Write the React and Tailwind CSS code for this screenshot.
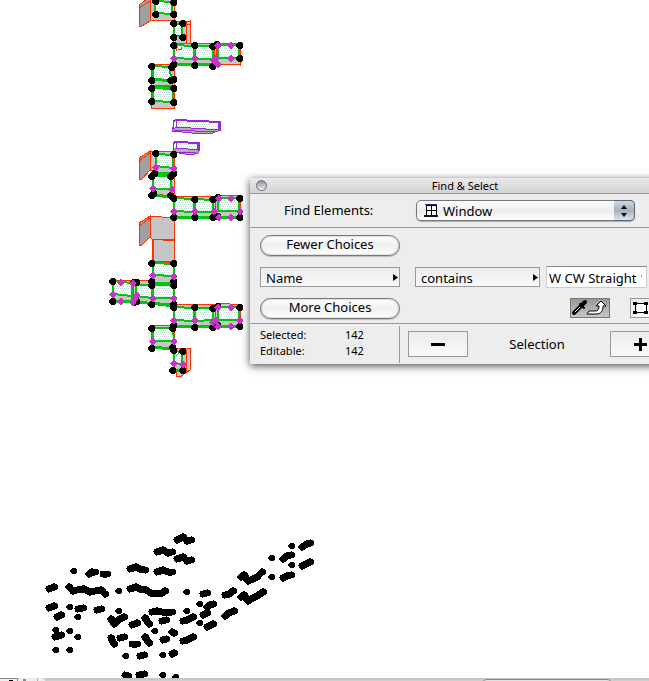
import React, { useState } from 'react';

// Wall faces, drawn behind the windows
const faces = [
  { points: '139,5 150,-3 150,21 142,26 139,26', fill: '#a0a0a0' },
  { points: '150,-3 174,-3 174,21 150,20', fill: '#c6c6c6' },
  { points: '173,22 190,21 190,43 173,43', fill: '#c6c6c6' },
  { points: '173,43 217,43 240,43 240,65 214,64 173,65', fill: '#c6c6c6' },
  { points: '151,64 174,64 174,108 151,108', fill: '#c6c6c6' },
  { points: '139,158 150,151 150,170 142,179 139,179', fill: '#a0a0a0' },
  { points: '150,151 174,152 174,196 152,194 152,170 150,170', fill: '#c6c6c6' },
  { points: '173,196 213,197 220,195 240,196 240,218 173,218', fill: '#c6c6c6' },
  { points: '139,223 150,216 150,237 142,245 139,245', fill: '#a0a0a0' },
  { points: '150,216 174,218 174,240 152,239 150,237', fill: '#c6c6c6' },
  { points: '152,239 174,241 174,261 152,261', fill: '#c6c6c6' },
  { points: '152,262 174,262 174,305 112,302 112,280 152,281', fill: '#c6c6c6' },
  { points: '173,304 213,305 220,303 240,305 240,327 173,327', fill: '#c6c6c6' },
  { points: '151,326 174,325 174,348 151,348', fill: '#c6c6c6' },
  { points: '174,348 190,348 190,370 180,377 176,376 176,370 174,370', fill: '#c6c6c6' },
];

const creases = [
  '139,8 150,1', '186,22 186,43', '182,25 190,24', '178,30 176,38', '180,28 180,36',
  '214,44 214,64', '216,44 216,60', '176,47 183,49', '151,85 174,86',
  '139,161 150,153', '215,197 215,217', '139,226 150,218', '153,240 153,262',
  '131,282 131,300', '133,284 133,302', '215,305 215,325', '177,356 181,352', '186,350 186,372',
];

// Window openings: glass with green frame
const panes = [
  '155,1 172,2 172,14 155,13',
  '174,24 182,24 182,36 174,36',
  '174,45 194,46 194,59 174,58',
  '195,46 213,46 213,59 195,59',
  '218,45 239,45 239,58 218,58',
  '153,66 170,67 171,80 153,79',
  '153,88 173,89 173,102 153,101',
  '156,154 173,155 173,168 156,166',
  '153,176 171,176 171,189 153,189',
  '174,198 194,199 194,212 174,211',
  '195,199 213,200 213,212 195,212',
  '218,198 239,198 239,211 218,211',
  '153,263 174,264 174,276 153,275',
  '153,285 174,285 174,298 153,298',
  '136,284 152,286 152,298 136,296',
  '113,281 132,283 132,296 113,294',
  '174,307 194,308 194,321 174,320',
  '195,308 213,308 213,320 195,321',
  '218,307 239,307 239,320 218,320',
  '153,328 173,328 174,341 153,341',
  '174,351 182,352 182,364 174,363',
];

const sills = [
  '151,79 172,81', '151,87 173,88', '173,64 213,65', '173,217 239,217', '151,195 173,197',
  '154,173 173,173', '151,283 173,283', '112,301 134,302', '134,302 173,305', '173,326 239,326',
  '151,347 173,349', '173,370 182,370', '151,303 173,306',
];

const nodes = [
  [155, 1], [173, 2], [155, 14], [173, 14],
  [173, 23], [182, 23], [173, 37], [182, 37],
  [173, 45], [194, 45], [212, 46], [216, 44], [239, 45], [239, 58],
  [173, 64], [171, 67], [194, 65], [212, 66], [215, 63],
  [151, 66], [151, 80], [170, 80], [173, 79], [151, 88], [173, 88], [151, 101], [173, 102],
  [155, 153], [173, 154], [151, 176], [154, 173], [173, 173], [170, 176],
  [151, 195], [153, 193], [170, 195],
  [173, 198], [194, 199], [212, 199], [217, 197], [239, 198],
  [173, 217], [194, 217], [212, 217], [217, 216], [239, 217],
  [151, 263], [173, 263], [151, 281], [151, 285], [173, 281], [173, 285], [151, 304], [173, 304],
  [112, 281], [133, 282], [136, 282], [112, 301], [133, 302], [136, 301],
  [173, 307], [194, 307], [212, 308], [217, 306], [239, 307],
  [173, 325], [172, 328], [194, 327], [212, 327], [217, 325], [239, 326],
  [151, 328], [151, 348], [172, 347], [173, 350], [182, 351], [172, 370], [182, 370],
];

const grips = [
  [173, 58], [194, 58], [213, 60], [215, 58], [217, 45], [230, 45], [217, 64], [230, 58],
  [155, 167], [173, 168], [152, 188], [171, 189],
  [173, 211], [194, 211], [213, 211], [218, 198], [230, 198], [239, 211], [218, 217], [230, 217],
  [152, 275], [173, 276], [152, 298], [173, 298],
  [120, 282], [132, 283], [112, 294], [136, 295], [134, 298], [120, 301], [132, 302],
  [173, 320], [194, 320], [212, 322], [215, 320], [217, 307], [230, 307], [239, 320], [217, 326], [230, 326],
  [152, 341], [173, 341], [173, 363], [182, 364],
];

// Selection points of the second group
const points = [
  [73, 571], [89, 574], [92, 572], [95, 572], [103, 574], [107, 574],
  [49, 589], [54, 587], [69, 587], [73, 591], [77, 590], [82, 589], [84, 589],
  [90, 592], [95, 591], [101, 590], [102, 591], [105, 594], [118, 591],
  [130, 569], [136, 567], [140, 569], [145, 570], [157, 552], [163, 550], [168, 553], [172, 552],
  [157, 572], [163, 570], [168, 572], [172, 572],
  [130, 589], [136, 587], [140, 589], [146, 590], [151, 593], [157, 593], [162, 593], [165, 591],
  [49, 608], [54, 606], [69, 607], [78, 609], [83, 608], [57, 617], [61, 615], [77, 617],
  [97, 610], [101, 609], [118, 611], [111, 619], [114, 624], [120, 619], [124, 617],
  [132, 625], [137, 623], [145, 618], [149, 624], [152, 612], [157, 611], [162, 612], [167, 612], [172, 612],
  [162, 621], [166, 620], [154, 631], [172, 632], [174, 633],
  [55, 630], [69, 631], [55, 637], [61, 635], [77, 637], [55, 650], [69, 650],
  [111, 638], [114, 644], [120, 638], [124, 637], [132, 644], [137, 644], [145, 637], [149, 643],
  [163, 640], [166, 639], [125, 656], [140, 656], [144, 655], [162, 655], [172, 654], [174, 653],
  [125, 675], [128, 676], [139, 675], [144, 674], [162, 675], [175, 677],
  [177, 540], [183, 537], [187, 541], [191, 540], [177, 559], [183, 557], [187, 561], [191, 560],
  [186, 592], [203, 594], [207, 593], [225, 595], [229, 594], [233, 591],
  [241, 577], [244, 575], [248, 581], [253, 579], [257, 577], [262, 572],
  [271, 558], [271, 577], [283, 559], [287, 556], [291, 555], [291, 546], [302, 547], [307, 544], [310, 543],
  [291, 565], [283, 578], [287, 576], [291, 575], [302, 566], [306, 564], [310, 562],
  [241, 597], [244, 595], [248, 601], [253, 598], [257, 596], [263, 592],
  [199, 604], [186, 611], [207, 607], [210, 605], [213, 604], [203, 615], [207, 613],
  [225, 616], [229, 613], [234, 611], [183, 621], [187, 620], [193, 617],
  [199, 623], [207, 627], [213, 624], [183, 641], [187, 640], [193, 637],
];

// Neighbouring points run together into one blob
const links = points
  .slice(1)
  .map((p, i) => [points[i], p])
  .filter(([a, b]) => Math.hypot(a[0] - b[0], a[1] - b[1]) < 8);

const Drawing = () => (
  <svg className="block h-[678px] w-[649px] shrink-0" viewBox="0 0 649 678" shapeRendering="crispEdges" role="img" aria-label="3D view">
    <defs>
      <pattern id="glass" width="4" height="4" patternUnits="userSpaceOnUse">
        <rect width="4" height="4" fill="#fff" />
        <path d="M0 0h1v1H0zM2 0h1v1H2zM1 2h1v1H1zM3 2h1v1H3z" fill="#c3dfd5" />
      </pattern>
    </defs>

    <g stroke="#ff3300">
      {faces.map((f) => (
        <polygon key={f.points} points={f.points} fill={f.fill} />
      ))}
      {creases.map((c) => (
        <polyline key={c} points={c} fill="none" />
      ))}
    </g>

    <g stroke="#9b26d3" strokeWidth="1">
      <polygon points="172,128 177,127 220,130 213,133 192,133 172,131" fill="#b0b0b0" />
      <polygon points="173,122 176,120 197,121 220,122 220,130 177,127 173,129" fill="url(#glass)" />
      <path d="M173 121l4-1 20 1 23 1v8" fill="none" strokeWidth="2" />
      <path d="M173 121v8M176 119v9M218 121v8M174 130l42 2M177 127l43 3" fill="none" />
      <polygon points="176,148 199,149 198,153 192,155 172,152" fill="#b0b0b0" />
      <polygon points="176,142 199,143 199,150 176,148 173,151 173,143" fill="url(#glass)" />
      <path d="M173 143l3-1 23 1v6" fill="none" strokeWidth="2" />
      <path d="M176 141v8M197 142v7M174 152l22 1" fill="none" />
    </g>

    <g stroke="#00c60d" strokeWidth="2">
      {panes.map((p) => (
        <polygon key={p} points={p} fill="url(#glass)" />
      ))}
      {sills.map((s) => (
        <polyline key={s} points={s} fill="none" strokeWidth="3" />
      ))}
    </g>

    <path d="M176 47v4M176 47h2M178 49h3M181 47v3M176 356l3-3M214 46v16" stroke="#ff3300" fill="none" />

    {nodes.map(([x, y], i) => (
      <path key={i} d={`M${x - 1} ${y - 3}h3l2 2v3l-2 2h-3l-2-2v-3z`} />
    ))}
    <g fill="#c832c8">
      {grips.map(([x, y], i) => (
        <path key={i} d={`M${x} ${y - 3}h1l3 3v1l-3 3h-1l-3-3v-1z`} />
      ))}
    </g>
    {points.map(([x, y], i) => (
      <path key={i} d={`M${x - 1} ${y - 3}h3l2 2v2l-2 2h-3l-2-2v-2z`} />
    ))}
    <g stroke="#000" strokeWidth="7" strokeLinecap="round">
      {links.map(([a, b], i) => (
        <path key={i} d={`M${a[0]} ${a[1]}L${b[0]} ${b[1]}`} />
      ))}
    </g>
  </svg>
);

const WindowIcon = () => (
  <svg className="pointer-events-none absolute left-2 top-1 h-[13px] w-[14px]" viewBox="0 0 14 13" shapeRendering="crispEdges" aria-hidden="true">
    <path d="M2 1h10v10H2z" fill="#fff" stroke="#000" />
    <path d="M1 0h12v1H1z" fill="#26268a" />
    <path d="M7 1v10M2 6h10" stroke="#000" fill="none" />
    <path d="M0 11h14v2H0z" fill="#111133" />
  </svg>
);

const PopupField = ({ label, value, onChange, options }) => (
  <div className="relative">
    <select
      aria-label={label}
      value={value}
      onChange={(e) => onChange(e.target.value)}
      className="block h-5 w-full appearance-none border border-[#999] bg-linear-to-b from-[#ebebeb] to-[#fafafa] pl-[5px] pt-px text-[13px] leading-[18px] text-black"
    >
      {options.map((o) => (
        <option key={o}>{o}</option>
      ))}
    </select>
    <svg className="pointer-events-none absolute right-[2px] top-[7px] h-[7px] w-[5px]" viewBox="0 0 5 7" aria-hidden="true">
      <path d="M0 0l5 3.5L0 7z" />
    </svg>
  </div>
);

const pillClass =
  'h-[21px] w-[140px] rounded-full border border-[#777] bg-linear-to-b from-white via-[#f0f0f0] to-white pb-[2px] text-[13px] leading-[17px] text-black shadow-[inset_0_0_2px_#999,0_1px_1px_#bbb]';

const flatClass = 'flex items-center justify-center border border-[#999] bg-linear-to-b from-[#ebebeb] to-[#fafafa]';

const FindSelect = () => {
  const [element, setElement] = useState('Window');
  const [criterion, setCriterion] = useState('Name');
  const [operator, setOperator] = useState('contains');
  const [text, setText] = useState('W CW Straight 1');
  const [picked, setPicked] = useState(true);

  return (
    <section
      aria-label="Find & Select"
      className="absolute left-[250px] top-[178px] w-[430px] bg-[#ededed] text-[13px] text-black shadow-[0_2px_8px_rgba(0,0,0,0.7)]"
    >
      <header className="grid h-4 grid-cols-[24px_1fr_24px] items-center border-b border-[#999] bg-linear-to-b from-[#e9e9e9] to-[#d3d3d3]">
        <button
          type="button"
          aria-label="Close"
          className="ml-[6px] size-[11px] rounded-full border border-[#6d7078] bg-linear-to-b from-[#8e929b] to-[#f4f4f8]"
        />
        <h1 className="text-center text-[11px] leading-[14px]">Find &amp; Select</h1>
      </header>

      <div className="flex h-[34px] items-center border-b border-[#999] pl-[34px]">
        <label htmlFor="element" className="w-[132px] pt-px">Find Elements:</label>
        <div className="relative">
          <select
            id="element"
            value={element}
            onChange={(e) => setElement(e.target.value)}
            className="block h-[21px] w-[219px] appearance-none rounded-[5px] border border-[#777] bg-linear-to-b from-white via-[#ececec] to-white pl-[26px] leading-[18px] shadow-[0_1px_1px_#aaa]"
          >
            <option>Window</option>
            <option>Door</option>
            <option>Wall</option>
          </select>
          <WindowIcon />
          <span className="pointer-events-none absolute inset-y-0 right-0 flex w-[21px] items-center justify-center rounded-r-[5px] border border-l-0 border-[#5d6470] bg-linear-to-b from-[#d5dbe3] via-[#a4afbb] to-[#dbe5ee]">
            <svg className="h-3 w-[6px]" viewBox="0 0 6 12" aria-hidden="true">
              <path d="M3 0l3 4H0zM3 12l3-4H0z" />
            </svg>
          </span>
        </div>
      </div>

      <div className="flex h-24 flex-col justify-between border-b border-[#999] pb-1 pl-[10px] pt-[7px]">
        <button type="button" className={pillClass}>Fewer Choices</button>
        <div className="grid grid-cols-[140px_125px_101px] items-center">
          <PopupField label="Criterion" value={criterion} onChange={setCriterion} options={['Name', 'Layer', 'Pen']} />
          <div className="ml-[15px] w-[125px]">
            <PopupField label="Condition" value={operator} onChange={setOperator} options={['contains', 'is', 'is not']} />
          </div>
          <input
            aria-label="Value"
            value={text}
            onChange={(e) => setText(e.target.value)}
            className="ml-[21px] h-[22px] w-[101px] border border-[#ccc] border-t-[#888] bg-white pl-[2px] pr-1 pt-px leading-5"
          />
        </div>
        <div className="flex">
          <button type="button" className={pillClass}>More Choices</button>
          <button
            type="button"
            aria-label="Pick up settings"
            aria-pressed={picked}
            onClick={() => setPicked(!picked)}
            className="ml-[170px] flex h-5 w-10 items-center justify-center border border-[#777] bg-linear-to-b from-[#999] to-[#c6c6c6]"
          >
            <svg className="h-[18px] w-[38px]" viewBox="0 0 38 18" aria-hidden="true">
              <path d="M3 14l7-7" stroke="#000" strokeWidth="4" strokeLinecap="round" />
              <path d="M4 13l5-5" stroke="#fff" />
              <path d="M9 5l4 4" stroke="#000" strokeWidth="2" strokeLinecap="round" />
              <path d="M11 6l3-3" stroke="#000" strokeWidth="4" strokeLinecap="round" />
              <path d="M18 12h6c3 0 4-2 4-5h-3l5-5 5 5h-3c0 5-2 8-7 8h-9z" fill="#fff" stroke="#000" />
            </svg>
          </button>
          <button type="button" aria-label="Select by area" className={`${flatClass} ml-5 h-5 w-10`}>
            <svg className="h-[14px] w-[38px]" viewBox="0 0 38 14" shapeRendering="crispEdges" aria-hidden="true">
              <path d="M4 2h11v9H4z" fill="#fff" stroke="#000" />
              <path d="M2 1h4v3H2zM13 1h4v3h-4zM2 10h4v3H2zM13 10h4v3h-4z" />
            </svg>
          </button>
        </div>
      </div>

      <footer className="flex h-10 items-center">
        <dl className="grid h-[37px] w-[150px] grid-cols-[85px_1fr] content-center border-r border-[#999] pb-[2px] pl-[10px] text-[11px] leading-4">
          <dt>Selected:</dt>
          <dd>142</dd>
          <dt>Editable:</dt>
          <dd>142</dd>
        </dl>
        <button type="button" aria-label="Remove from selection" className={`${flatClass} ml-2 h-[26px] w-[60px]`}>
          <svg className="h-[13px] w-[14px]" viewBox="0 0 14 13" shapeRendering="crispEdges" aria-hidden="true">
            <path d="M0 5h14v3H0z" />
          </svg>
        </button>
        <span className="w-[142px] pr-1 pt-px text-center">Selection</span>
        <button type="button" aria-label="Add to selection" className={`${flatClass} h-[26px] w-[60px]`}>
          <svg className="h-[13px] w-[13px]" viewBox="0 0 13 13" shapeRendering="crispEdges" aria-hidden="true">
            <path d="M0 5h5V0h3v5h5v3H8v5H5V8H0z" />
          </svg>
        </button>
      </footer>
    </section>
  );
};

// Top edge of the horizontal scroll bar
const ScrollEdge = () => (
  <div className="flex h-[3px] shrink-0 overflow-hidden bg-linear-to-b from-[#c0c0c0] to-[#d0d0d0]">
    <div className="flex w-[18px] justify-end border-r border-t border-[#888] bg-[#eee] pr-1">
      <span className="mt-px w-1 bg-black" />
    </div>
    <div className="w-5 border-r border-[#aaa] bg-[#eee] pl-[5px]">
      <span className="mt-px block h-[2px] w-[3px] bg-[#888]" />
    </div>
    <div className="w-[7px] rounded-tr-sm bg-[#eee]" />
    <div className="ml-auto mr-[36px] mt-px h-5 w-[132px] rounded-md border border-[#888] bg-[#e0e0e0]" />
  </div>
);

const App = () => (
  <main className="flex h-screen flex-col overflow-hidden bg-white font-['Noto_Sans','Open_Sans',sans-serif]">
    <div className="relative min-h-0 flex-1 overflow-hidden">
      <Drawing />
      <FindSelect />
    </div>
    <ScrollEdge />
  </main>
);

export default App;
